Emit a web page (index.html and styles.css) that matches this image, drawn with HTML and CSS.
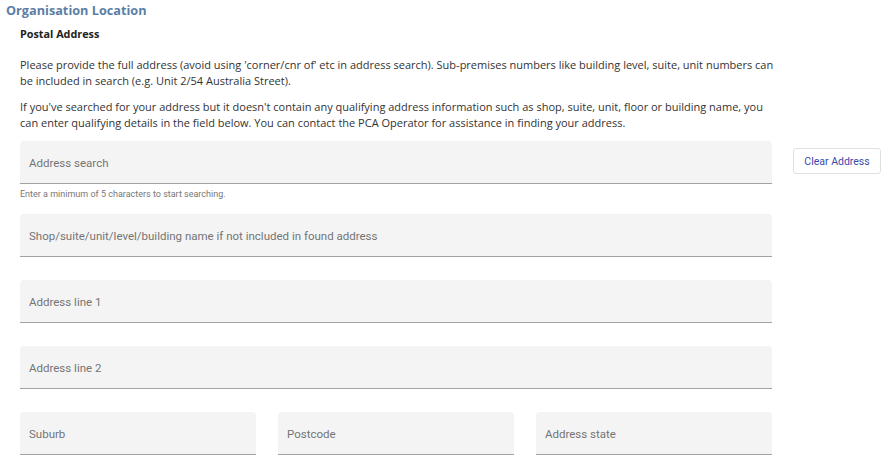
FILE: index.html
```html
<!DOCTYPE html>
<html lang="en">
<head>
<meta charset="utf-8">
<title>Organisation Location</title>
<link rel="stylesheet" href="styles.css">
</head>
<body>
<div class="page">
  <h2 class="section-title">Organisation Location</h2>
  <div class="section">
    <h3 class="sub-title">Postal Address</h3>
    <p class="info">Please provide the full address (avoid using 'corner/cnr of' etc in address search). Sub-premises numbers like building level, suite, unit numbers can be included in search (e.g. Unit 2/54 Australia Street).</p>
    <p class="info">If you've searched for your address but it doesn't contain any qualifying address information such as shop, suite, unit, floor or building name, you can enter qualifying details in the field below. You can contact the PCA Operator for assistance in finding your address.</p>

    <div class="search-row">
      <div class="search-col">
        <div class="field"><span class="label">Address search</span></div>
        <div class="hint">Enter a minimum of 5 characters to start searching.</div>
      </div>
      <button class="clear-btn" type="button">Clear Address</button>
    </div>

    <div class="fields">
      <div class="field"><span class="label">Shop/suite/unit/level/building name if not included in found address</span></div>
      <div class="field"><span class="label">Address line 1</span></div>
      <div class="field"><span class="label">Address line 2</span></div>
      <div class="triple">
        <div class="field"><span class="label">Suburb</span></div>
        <div class="field"><span class="label">Postcode</span></div>
        <div class="field"><span class="label">Address state</span></div>
      </div>
    </div>
  </div>
</div>
</body>
</html>
```
FILE: styles.css
```css
* { box-sizing: border-box; }
html, body { margin: 0; padding: 0; background: #fff; }
body {
  font-family: "Open Sans", "Segoe UI", Arial, sans-serif;
  color: #333;
}
.page { padding: 2px 0 0 6px; }
.section-title {
  margin: 0;
  font-size: 12.7px;
  line-height: 16px;
  font-weight: 700;
  color: #5b7ea6;
}
.section { padding: 0 0 0 14px; }
.sub-title {
  margin: 8px 0 0;
  font-size: 10.8px;
  line-height: 16px;
  font-weight: 700;
  color: #222;
}
.info {
  margin: 15px 0 0;
  font-size: 11px;
  line-height: 16px;
  color: #333;
  width: 760px;
}
.info + .info { margin-top: 10px; }
.search-row {
  display: flex;
  align-items: flex-start;
  margin-top: 10px;
}
.search-col { width: 752px; }
.field {
  height: 43px;
  background: #f4f4f4;
  border-bottom: 1px solid #a2a2a2;
  border-radius: 4px 4px 0 0;
  display: flex;
  align-items: center;
  padding: 0 9px;
  font-family: Roboto, Arial, sans-serif;
}
.label {
  font-size: 11.5px;
  color: #747474;
  position: relative;
  top: 1px;
}
.hint {
  font-family: Roboto, Arial, sans-serif;
  font-size: 9px;
  color: #777;
  margin-top: 5px;
  line-height: 11px;
}
.clear-btn {
  margin: 7px 0 0 21px;
  width: 88px;
  height: 26px;
  background: #fff;
  border: 1px solid #e0e0e0;
  border-radius: 3px;
  font-family: Roboto, Arial, sans-serif;
  font-size: 10.5px;
  color: #3949ab;
  padding: 0;
}
.fields {
  width: 752px;
  display: flex;
  flex-direction: column;
  gap: 23px;
  margin-top: 14px;
}
.triple {
  display: grid;
  grid-template-columns: 1fr 1fr 1fr;
  gap: 22px;
}
```
